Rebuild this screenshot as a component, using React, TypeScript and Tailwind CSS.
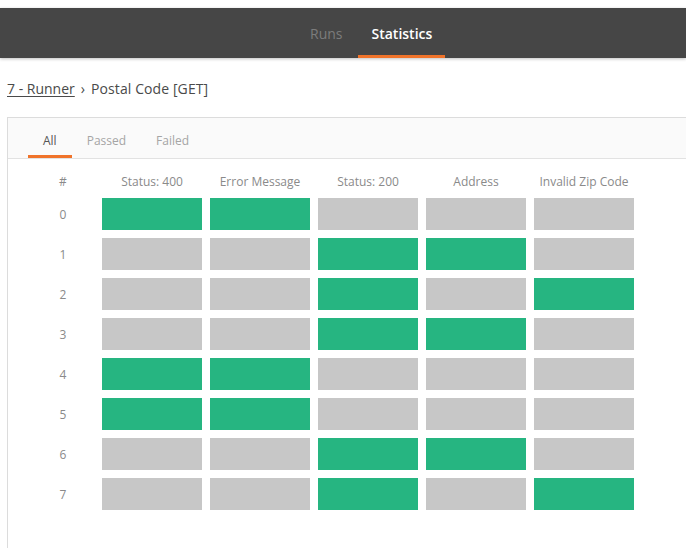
const columns = ["Status: 400", "Error Message", "Status: 200", "Address", "Invalid Zip Code"];

// 1 = passed (green), 0 = not hit (grey)
const runs = [
  [1, 1, 0, 0, 0],
  [0, 0, 1, 1, 0],
  [0, 0, 1, 0, 1],
  [0, 0, 1, 1, 0],
  [1, 1, 0, 0, 0],
  [1, 1, 0, 0, 0],
  [0, 0, 1, 1, 0],
  [0, 0, 1, 0, 1],
];

const App = () => {
  return (
    <div className="h-[548px] overflow-hidden bg-white font-['Open_Sans',sans-serif]">
      <div className="h-2 bg-white" />
      <nav className="relative z-10 flex h-[50px] bg-[#464646] pl-[296px] shadow-[0_1px_3px_rgba(0,0,0,0.25)]">
        <button className="flex h-full items-center border-b-[3px] border-transparent px-[14px] pt-[3px] text-[14px] text-[#7c7c7c]" type="button">
          Runs
        </button>
        <button className="ml-[2px] flex h-full items-center border-b-[3px] border-[#f0732a] px-[13px] pt-[3px] text-[14px] font-semibold text-white" type="button">
          Statistics
        </button>
      </nav>

      <div className="flex h-[59px] items-center px-[7px] pt-[2px] text-[14px] text-[#4a4a4a]">
        <span className="underline underline-offset-2">7 - Runner</span>
        <span className="mx-[6px]">›</span>
        <span className="tracking-[0.1px]">Postal Code [GET]</span>
      </div>

      <div className="ml-[7px] min-h-[440px] border-l border-t border-[#dcdcdc]">
        <div className="flex h-[41px] border-b border-[#e2e2e2] bg-[#fafafa] pl-5 text-[12px]">
          <div className="flex items-center border-b-[3px] border-[#f0732a] px-[15px] pt-[8px] text-[#555]">All</div>
          <div className="flex items-center px-[15px] pt-[5px] text-[#a5a5a5]">Passed</div>
          <div className="flex items-center px-[15px] pt-[5px] text-[#a5a5a5]">Failed</div>
        </div>

        <div className="pl-6 pt-[11px]">
          <div className="grid grid-cols-[62px_repeat(5,100px)] gap-x-2 text-[12px] text-[#8a8a8a]">
            <div className="flex h-6 items-center justify-center">#</div>
            {columns.map((name) => (
              <div className="flex h-6 items-center justify-center" key={name}>
                {name}
              </div>
            ))}
          </div>
          <div className="mt-1 grid grid-cols-[62px_repeat(5,100px)] gap-2 text-[12px] text-[#8a8a8a]">
            {runs.map((row, index) => (
              <div className="contents" key={index}>
                <div className="flex h-8 items-center justify-center pt-px">{index}</div>
                {row.map((hit, col) => (
                  <div
                    className={hit ? "h-8 bg-[#26b581]" : "h-8 bg-[#c7c7c7]"}
                    key={col}
                  />
                ))}
              </div>
            ))}
          </div>
        </div>
      </div>
    </div>
  );
};

export default App;
